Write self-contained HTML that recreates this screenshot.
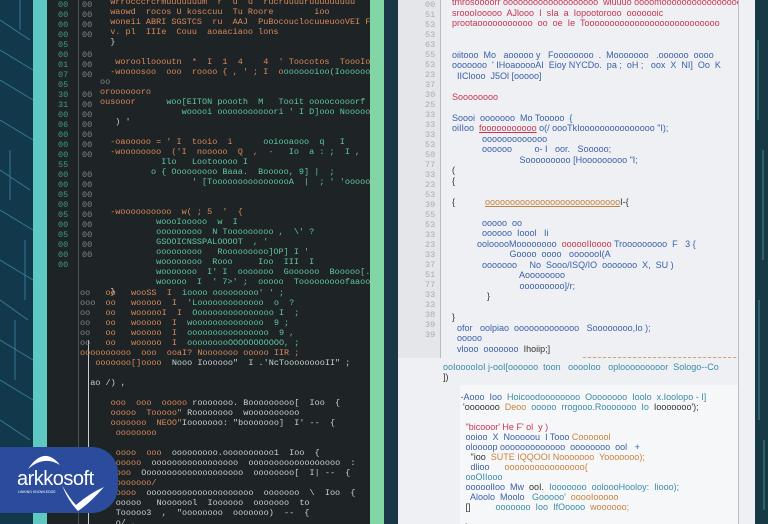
<!DOCTYPE html>
<html><head><style>
body{margin:0;width:768px;height:524px;overflow:hidden;position:relative;background:#0f3447;font-family:"Liberation Mono",monospace;}
.c{position:absolute;overflow:hidden;}
.a{position:absolute;white-space:pre;font-size:8.5px;line-height:10px;}
.l{font-family:"Liberation Sans",sans-serif;font-size:9px;}
.o{color:#d98a5a}.g{color:#5fc8a0}.w{color:#c9d2cf}.n{color:#3f9d80}.s{color:#7d8a88}
.r{color:#c8344f}.b{color:#3a5fa8}.t{color:#3a8aa8}.y{color:#c8823f}.k{color:#333}.q{color:#aab}
</style></head><body>
<svg style="position:absolute;left:0;top:0" width="36" height="524">
<rect width="36" height="524" fill="#12384c"/>
<g stroke="#3d8aa6" stroke-width="1" fill="none" opacity=".8">
<path d="M0 20 L30 40 M0 50 L33 70 M0 80 L33 100 M0 120 L33 140 M0 170 L30 190 M0 210 L33 230 M0 260 L33 280 M0 300 L28 320 M0 340 L33 360 M0 380 L33 400 M0 420 L30 440 M20 0 V30 M10 150 V200 M25 240 V300 M15 320 V380"/>
</g></svg>
<div style="position:absolute;left:33px;top:0;width:14px;height:524px;background:#5ec9c2"></div>
<div style="position:absolute;left:370px;top:0;width:14px;height:524px;background:#82d6a6"></div>
<div style="position:absolute;left:384px;top:0;width:14px;height:524px;background:#1b3645"></div>
<svg style="position:absolute;left:755px;top:0" width="13" height="524"><rect width="13" height="524" fill="#173a46"/><path d="M3 40 V120 M8 150 V260 M4 300 V420 M9 440 V510" stroke="#3f8c92" fill="none"/></svg>

<div class="c" style="left:47px;top:0;width:323px;height:524px;background:#1e2326">
<div style="position:absolute;left:31px;top:0;width:1px;height:524px;background:#4a5253"></div>
<div style="position:absolute;left:41px;top:340px;width:1px;height:184px;background:#c9d0cf"></div>
<div class="a n" style="left:11px;top:0">00
00
00
00
05
00
01
07
05
30
31
00
06
00
00
00
55
00
00
05
00
05
00
05
00
00
00</div>
<div class="a s" style="left:35px;top:0">00
00
00
00

00
00
00

00
00
00
00
00
00
00

00
00
00
00
00
00
00
00
00</div>
<div class="a" style="left:53px;top:-3px"><span class="o">  wrrocccrcrmuuuuuuum  r  u  u  rucruuuuruuuuuuuuu</span>
<span class="o">  waowd  rocos U kosccuu  Tu Roore        ioo        ru</span>
<span class="o">  woneii ABRI SGSTCS  ru  AAJ  PuBocouclocuueuooVEI FU</span>
<span class="o">  v. pl  IIIe  Couu  aoaaciaoo lons</span>
<span class="w">  }</span>

<span class="o">   woroolloooutn  *  I  1  4    4  ' Toocotos  ToooIoF  X</span>
<span class="o">  -woooosoo  ooo  roooo { , ' ; I  o</span><span class="g">ooooooioo(Iooooooi ) 9</span>
<span class="s">oo</span>
<span class="o">orooooooro</span>
<span class="o">ousooor      </span><span class="g">woo[EITON poooth  M   Tooit oooocoooorf  'l I</span>
<span class="g">                wooooi ooooooooooori ' I D]ooo NooooooI [ I ro</span>
<span class="w">   ) '  </span>

<span class="o">  -oaooooo = ' I  tooio  i      </span><span class="g">ooiooaooo  q   I</span>
<span class="o">  -woooooooo  ('I  nooooo  Q  ,  -   </span><span class="g">Io  a : ;  I ,</span>
<span class="g">            Ilo   Lootooooo I</span>
<span class="g">          o { Ooooooooo Baaa.  Booooo, 9] |  ;</span>
<span class="g">                  ' [ToooooooooooooooA  |  ; ' 'ooooooooooo'  ' I  ,</span>


<span class="o">  -woooooooooo  w( ; 5  '  {</span>
<span class="g">           woooIooooo  w  I</span>
<span class="g">           ooooooooo  N Tooooooooo ,  \' ?</span>
<span class="g">           GSOOICNSSPALOOOOT  , '</span>
<span class="g">           ooooooooo   Rooooooooo]OP] I '</span>
<span class="g">           woooooooo  Rooo     Ioo  III  I</span>
<span class="g">           wooooooo  I' I  ooooooo  Goooooo  Booooo[. ' ;</span>
<span class="g">           wooooo  I  ' 7&gt;' ;  ooooo  Tooooooooofaaooo[ ' I</span>
<span class="w">  }</span></div>
<div class="a" style="left:33px;top:288px"><span class="s">oo </span>  <span class="o">oo   wooSS  I  </span><span class="g">ioooo ooooooooo' ' ;</span>
<span class="s">ooo</span>  <span class="o">oo   wooooo  I  </span><span class="g">'Looooooooooooo  o  ?</span>
<span class="s">oo </span>  <span class="o">oo   woooooI  I  </span><span class="g">Oooooooooooooooo I  ;</span>
<span class="s">oo </span>  <span class="o">oo   wooooo  I  </span><span class="g">woooooooooooooo  9 ;</span>
<span class="s">oo </span>  <span class="o">oo   wooooo  I  </span><span class="g">oooooooooooooooo  9 ,</span>
<span class="s">oo </span>  <span class="o">oo   wooooo  I  </span><span class="g">ooooooooOOOOOOOOOOO, ;</span>
<span class="o">oooooooooo  ooo  ooaI? Nooooooo ooooo IIR ;</span>
<span class="w">   </span><span class="o">ooooooo[]oooo  </span><span class="w">Nooo Ioooooo"  I .'NcTooooooooII" ;</span>

<span class="w">  ao /) ,</span>

<span class="w">      </span><span class="o">ooo  ooo  ooooo </span><span class="w">rooooooo. Booooooooo[  Ioo  {</span>
<span class="w">      </span><span class="o">ooooo  Tooooo" </span><span class="w">Roooooooo  woooooooooo</span>
<span class="w">      </span><span class="o">ooooooo  NEOO"</span><span class="w">Iooooooo: "booooooo]  I' --  {</span>
<span class="o">       oooooooo</span>

<span class="w">       </span><span class="o">oooo  ooo  </span><span class="w">ooooooooo.oooooooooo1  Ioo  {</span>
<span class="w">       </span><span class="o">ooooo  </span><span class="w">ooooooooooooooooo  oooooooooooooooooo  :</span>
<span class="w">       </span><span class="o">ooo  </span><span class="w">Oooooooooooooooooooo  oooooooo[  I| --  {</span>
<span class="o">       ooooooo/</span>
<span class="w">       </span><span class="o">oooo  </span><span class="w">ooooooooooooooooooooo  ooooooo  \  Ioo  {</span>
<span class="w">       ooooo   Nooooool  Ioooooo  ooooooo  to</span>
<span class="w">       Tooooo3  ,  "oooooooo  ooooooo)  --  {</span>
<span class="w">       o/ ,</span></div>
</div>

<div class="c" style="left:398px;top:0;width:357px;height:524px;background:#eef0f3">
<div style="position:absolute;left:0;top:0;width:42px;height:358px;background:#e4e6e9;border-right:1px solid #b8bcc0"></div>
<div style="position:absolute;left:340px;top:0;width:1px;height:524px;background:#b9bdc1"></div>
<div style="position:absolute;left:62px;top:385px;width:278px;height:139px;background:#f6f7f8"></div>
<div class="a q" style="left:27px;top:0">00
51
53
53
63
55
53
23
37
30
25
33
33
33
53
50
77
33
23
53
39
55
53
33
23
33
37
51
77
33
33
38
39
39</div>
<div class="c" style="left:43px;top:0;width:297px;height:358px">
<div class="a l" style="left:11px;top:-3px;line-height:10.5px"><span class="r">tmrosoooorr ooooooooooooooooooo  wiuuuo oooomoooooooooooooooo</span>
<span class="r">sroooIooooo  AJlooo  I  sIa  a  Iopootorooo  ooooooic</span>
<span class="r">prootaooooooooooo  oo  oe  Ie  Tooooooooooooooooooooooooooo</span>


<span class="b">oiitooo  Mo   aooooo y   Foooooooo  .  Mooooooo   .oooooo  oooo</span>
<span class="b">ooooooo  ' IHoaooooAI  Eioy NYCDo.  pa ;  oH ;   oox  X  NI]  Oo  K</span>
<span class="b">  IIClooo  J5Ol [ooooo]</span>

<span class="r">Soooooooo</span>

<span class="b">Soooi  ooooooo  Mo Tooooo  {</span>
<span class="b">oiIIoo  </span><span class="r"><u>fooooooooooo</u> </span><span class="b">o(/ oooTkIooooooooooooooo "I);</span>
<span class="b">            ooooooooooooo</span>
<span class="b">            oooooo         o- I   oor.   Sooooo;</span>
<span class="b">                           Sooooooooo [Hooooooooo "I;</span>
<span class="k">(</span>
<span class="k">{</span>

<span class="k">{            </span><span class="y"><u>ooooooooooooooooooooooooooo</u></span><span class="k">I-{</span>

<span class="b">            ooooo  oo</span>
<span class="b">            oooooo  Ioool   Ii</span>
<span class="b">          oolooooMoooooooo  </span><span class="r">oooooIIoooo </span><span class="b">Trooooooooo  F   3 {</span>
<span class="b">                       Goooo  oooo   ooooooI(A</span>
<span class="b">            ooooooo     No  Sooo/ISQ/IO  ooooooo  X,  SU )</span>
<span class="b">                           Aoooooooo</span>
<span class="b">                           ooooooooo]/r;</span>
<span class="k">              }</span>

<span class="k">}</span>
<span class="b">  ofor   oolpiao  ooooooooooooo   Soooooooo,Io );</span>
<span class="b">  ooooo</span>
<span class="b">  vlooo  ooooooo  </span><span class="k">Ihoiip;]</span>
<span class="y">                                                    <u>oooooooooooooooooooooooooooooooooooo</u></span></div>
</div>
<div class="c" style="left:45px;top:358px;width:295px;height:166px">
<div class="a l" style="left:0;top:4px;line-height:10px"><span class="t">ooIooooIoI j-ooI[oooooo  toon   ooooIoo   oplooooooooor  Sologo--Co</span>
<span class="k">])</span>

<span class="b">       -Aooo  Ioo  </span><span class="t">Hoicoodoooooooo  Oooooooo  Ioolo  x.Ioolopo - I]</span>
<span class="k">        'ooooooo  </span><span class="y">Deoo  </span><span class="t">ooooo  rrogooo.Rooooooo  Io  </span><span class="k">Iooooooo');</span>

<span class="r">         "bicooor' He F' ol  y )</span>
<span class="b">         ooioo  X  Nooooou  I Tooo </span><span class="y">Cooooool</span>
<span class="b">         oloooop ooooooooooooo  oooooooo  ool   +</span>
<span class="k">           "ioo  </span><span class="y">SUTE IQQOOI Nooooooo  Yooooooo);</span>
<span class="b">           dlioo      </span><span class="y">oooooooooooooooo{</span>
<span class="t">         ooOIIooo</span>
<span class="b">         ooooolIoo  Mw  </span><span class="k">ooI.  </span><span class="t">Iooooooo  ooloooHooloy:  Iiooo);</span>
<span class="b">           Aloolo  Moolo   </span><span class="t">Gooooo'  </span><span class="y">ooooIooooo</span>
<span class="k">         []          </span><span class="t">ooooooo  Ioo  IfOoooo  </span><span class="y">woooooo;</span>

<span class="k">         }</span></div>
</div>
</div>

<div style="position:absolute;left:0;top:447px;width:118px;height:66px;background:#2b4b9c;border-radius:0 26px 26px 0"></div>
<svg style="position:absolute;left:0;top:447px" width="118" height="70">
<path d="M28 22 Q44 -2 60 18 Q44 8 28 22Z" fill="#fff"/>
<path d="M62 38 Q70 52 76 58 Q90 46 104 40 Q90 56 78 64 Q68 54 62 38Z" fill="#fff"/>
<text x="17" y="38" font-family="Liberation Sans,sans-serif" font-size="20" fill="#fff" letter-spacing="-0.5">arkkosoft</text>
<text x="18" y="46" font-family="Liberation Sans,sans-serif" font-size="3.5" fill="#fff">LINKING KNOWLEDGE</text>
</svg>
</body></html>
